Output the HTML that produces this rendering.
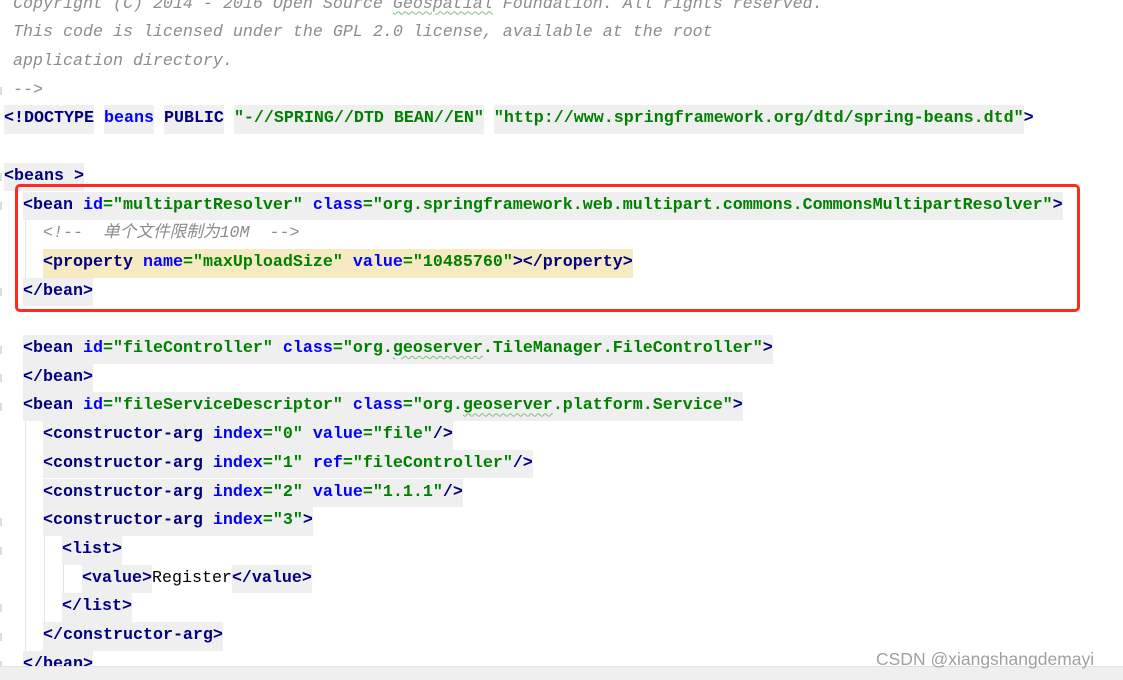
<!DOCTYPE html>
<html><head><meta charset="utf-8"><style>
html,body{margin:0;padding:0;background:#fff;width:1123px;height:680px;overflow:hidden;position:relative}
#w{position:absolute;left:0;top:3px;width:1123px;height:680px}
.l{position:absolute;left:0;height:28.7px;line-height:28.7px;white-space:pre;font-family:"Liberation Mono","Noto Sans CJK SC",monospace;font-size:16.67px;}
.l span{display:inline-block;height:28.7px;vertical-align:top}
.t{color:#000080;font-weight:bold}
.a{color:#0000ff;font-weight:bold}
.s{color:#008000;font-weight:bold}
.c{color:#8c8c8c;font-style:italic}
.b{background:#efefef}
.y{background:#f5eac1}
.w{text-decoration:underline wavy #7fbf7f;text-decoration-thickness:1px;text-underline-offset:3px}
.g{position:absolute;width:1px;background:#e4e4e4}
.m{position:absolute;left:0;width:2px;height:8px;background:#ddd}
</style></head><body>
<div id="w">
<div class="l c" style="top:-12.4px;left:13px">Copyright (C) 2014 - 2016 Open Source <u class="w" style="text-decoration-line:underline">Geospatial</u> Foundation. All rights reserved.</div>
<div class="l c" style="top:16.3px;left:13px">This code is licensed under the GPL 2.0 license, available at the root</div>
<div class="l c" style="top:45px;left:13px">application directory.</div>
<div class="l c" style="top:73.7px;left:13px">--&gt;</div>
<div class="l" style="top:102.4px;left:4px"><span class="t b">&lt;!DOCTYPE</span> <span class="a b">beans</span> <span class="t b">PUBLIC</span> <span class="s b">"-//SPRING//DTD BEAN//EN"</span> <span class="s b">"http://www.springframework.org/dtd/spring-beans.dtd"</span><span class="t">&gt;</span></div>
<div class="l" style="top:159.8px;left:4px"><span class="t b">&lt;beans &gt;</span></div>
<div class="l" style="top:188.5px;left:23px"><span class="b"><span class="t">&lt;bean </span><span class="a">id</span><span class="s">="multipartResolver" </span><span class="a">class</span><span class="s">="org.springframework.web.multipart.commons.CommonsMultipartResolver"</span><span class="t">&gt;</span></span></div>
<div class="l c" style="top:217.2px;left:43px">&lt;!--  单个文件限制为10M  --&gt;</div>
<div class="l" style="top:245.9px;left:43px"><span class="y"><span class="t">&lt;property </span><span class="a">name</span><span class="s">="maxUploadSize" </span><span class="a">value</span><span class="s">="10485760"</span><span class="t">&gt;&lt;/property&gt;</span></span></div>
<div class="l" style="top:274.6px;left:23px"><span class="t b">&lt;/bean&gt;</span></div>
<div class="l" style="top:332px;left:23px"><span class="b"><span class="t">&lt;bean </span><span class="a">id</span><span class="s">="fileController" </span><span class="a">class</span><span class="s">="org.<u class="w">geoserver</u>.TileManager.FileController"</span><span class="t">&gt;</span></span></div>
<div class="l" style="top:360.7px;left:23px"><span class="t b">&lt;/bean&gt;</span></div>
<div class="l" style="top:389.4px;left:23px"><span class="b"><span class="t">&lt;bean </span><span class="a">id</span><span class="s">="fileServiceDescriptor" </span><span class="a">class</span><span class="s">="org.<u class="w">geoserver</u>.platform.Service"</span><span class="t">&gt;</span></span></div>
<div class="l" style="top:418.1px;left:43px"><span class="b"><span class="t">&lt;constructor-arg </span><span class="a">index</span><span class="s">="0" </span><span class="a">value</span><span class="s">="file"</span><span class="t">/&gt;</span></span></div>
<div class="l" style="top:446.8px;left:43px"><span class="b"><span class="t">&lt;constructor-arg </span><span class="a">index</span><span class="s">="1" </span><span class="a">ref</span><span class="s">="fileController"</span><span class="t">/&gt;</span></span></div>
<div class="l" style="top:475.5px;left:43px"><span class="b"><span class="t">&lt;constructor-arg </span><span class="a">index</span><span class="s">="2" </span><span class="a">value</span><span class="s">="1.1.1"</span><span class="t">/&gt;</span></span></div>
<div class="l" style="top:504.2px;left:43px"><span class="b"><span class="t">&lt;constructor-arg </span><span class="a">index</span><span class="s">="3"</span><span class="t">&gt;</span></span></div>
<div class="l" style="top:532.9px;left:62px"><span class="t b">&lt;list&gt;</span></div>
<div class="l" style="top:561.6px;left:82px"><span class="t b">&lt;value&gt;</span><span>Register</span><span class="t b">&lt;/value&gt;</span></div>
<div class="l" style="top:590.3px;left:62px"><span class="t b">&lt;/list&gt;</span></div>
<div class="l" style="top:619px;left:43px"><span class="t b">&lt;/constructor-arg&gt;</span></div>
<div class="l" style="top:647.7px;left:23px"><span class="t b">&lt;/bean&gt;</span></div>
<div class="g" style="left:25px;top:217px;height:58px"></div>
<div class="g" style="left:25px;top:418px;height:230px"></div>
<div class="g" style="left:44px;top:533px;height:86px"></div>
<div class="g" style="left:63px;top:562px;height:28px"></div>
<div class="m" style="top:84px"></div><div class="m" style="top:170px"></div><div class="m" style="top:199px"></div><div class="m" style="top:285px"></div>
<div class="m" style="top:343px"></div><div class="m" style="top:371px"></div><div class="m" style="top:400px"></div><div class="m" style="top:515px"></div>
<div class="m" style="top:544px"></div><div class="m" style="top:601px"></div><div class="m" style="top:630px"></div><div class="m" style="top:658px"></div>
</div>
<div style="position:absolute;left:15px;top:184px;width:1059px;height:122px;border:3px solid #ff2a22;border-radius:5px"></div>
<div style="position:absolute;left:0;top:666px;width:1123px;height:14px;background:#efefef;border-top:1px solid #e2e2e2"></div>
<div style="position:absolute;left:876px;top:649px;font-family:'Liberation Sans',sans-serif;font-size:17.5px;color:#a0a0a0;white-space:nowrap;text-shadow:0 0 1px #fff">CSDN @xiangshangdemayi</div>
</body></html>
